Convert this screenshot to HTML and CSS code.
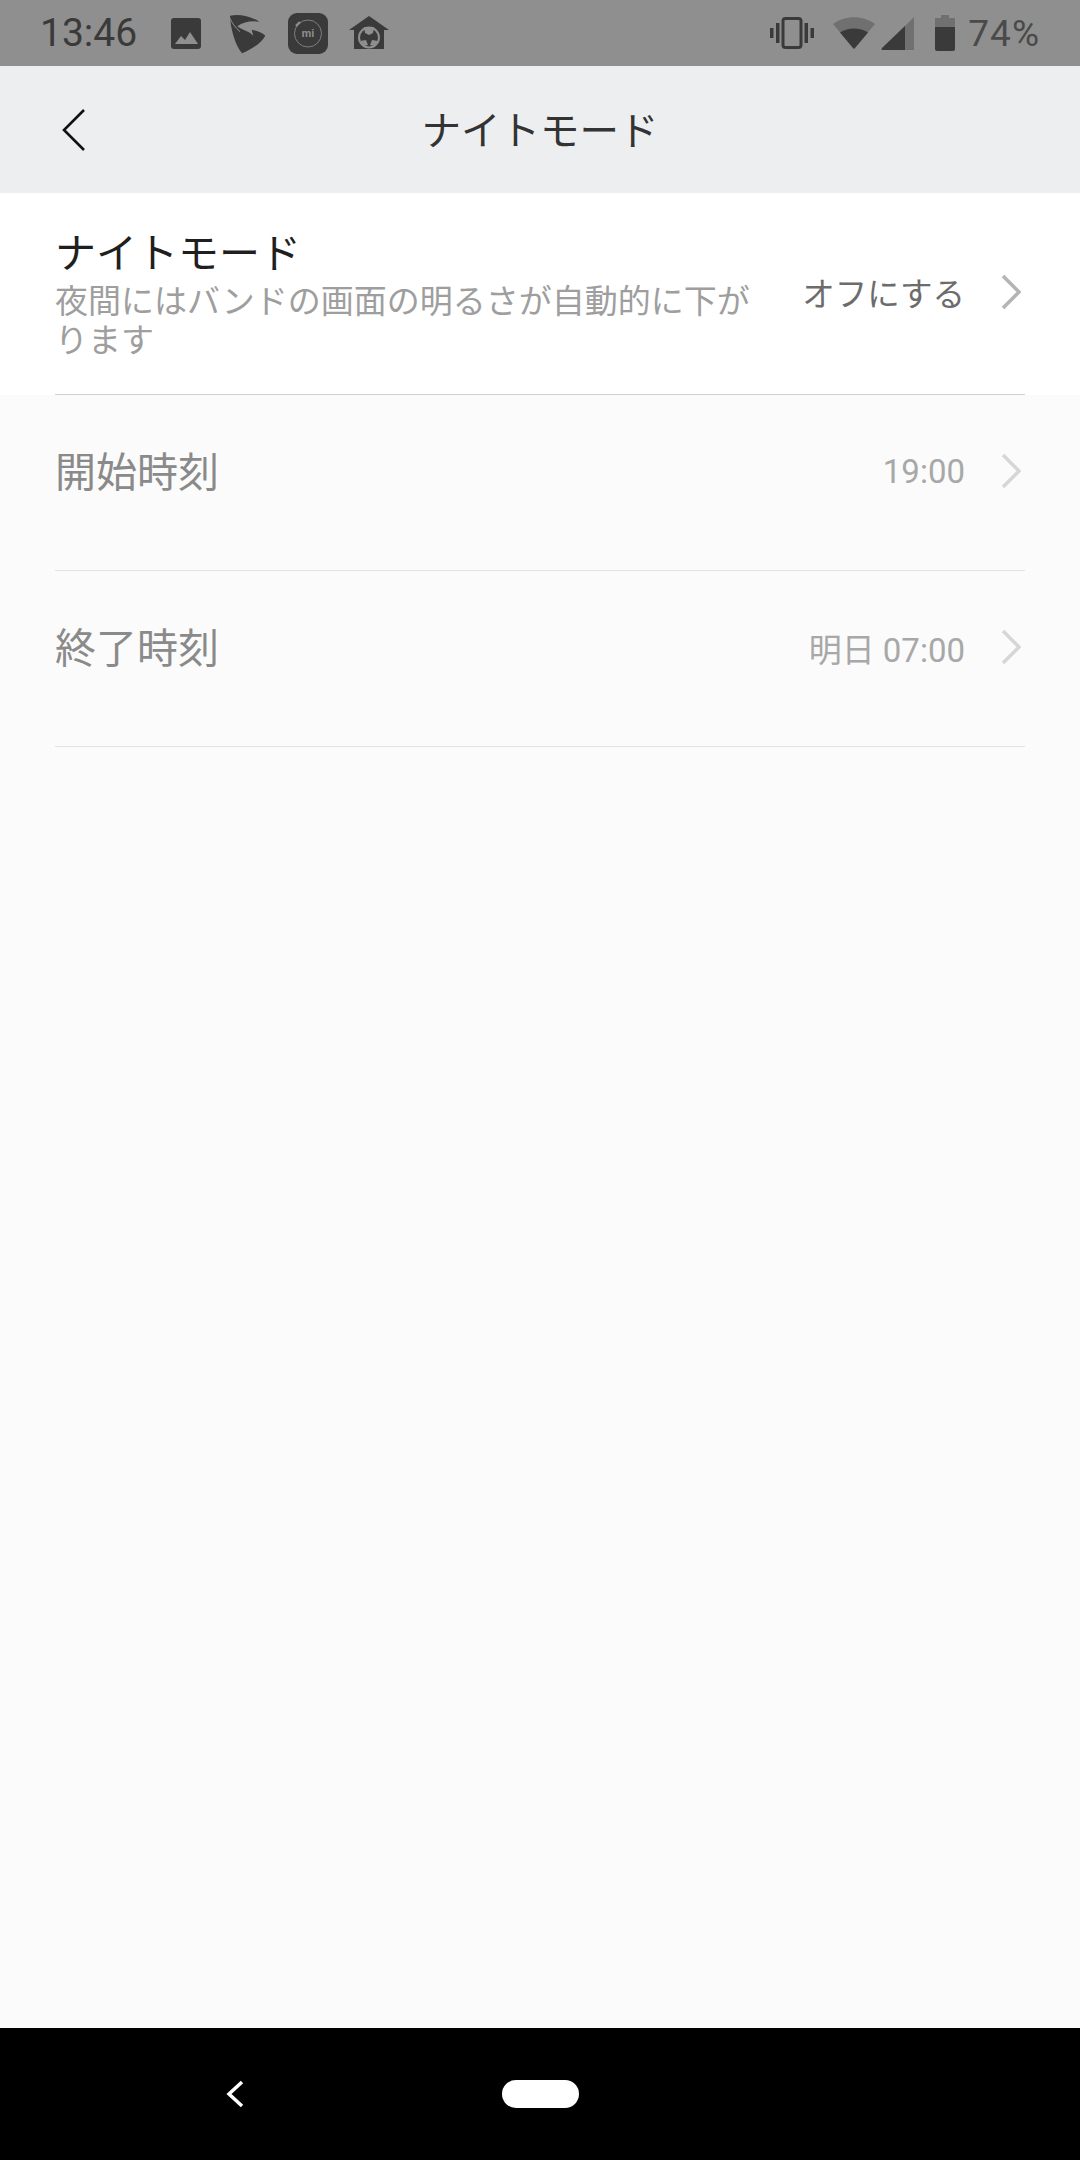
FILE: index.html
```html
<!DOCTYPE html>
<html lang="ja">
<head>
    <meta charset="UTF-8">
    <meta name="viewport" content="width=device-width, initial-scale=1.0">
    <title>ナイトモード</title>
    <link rel="stylesheet" href="styles.css">
</head>
<body>
    <div class="status-bar">
        <span class="clock">13:46</span>
        <div class="notif-icons">
            <svg class="ic-image" viewBox="0 0 30 31"><rect width="30" height="31" rx="3" fill="#3a3a3a"/><path d="M4 26 L10 18 L14 22 L19 14 L27 26 Z" fill="#8f8f8f"/></svg>
            <svg class="ic-swoosh" viewBox="0 0 180 135"><path d="M30 14 C55 8 90 14 118 32 C95 28 70 32 52 46 C65 56 85 60 100 74 L95 56 C112 60 128 66 136 74 C125 95 95 115 66 127 C45 100 32 55 30 14 Z" fill="#3a3a3a"/><path d="M30 22 C36 36 46 50 60 62" fill="none" stroke="#8f8f8f" stroke-width="3"/></svg>
            <svg class="ic-mi" viewBox="0 0 40 41"><rect width="40" height="41" rx="9" fill="#3a3a3a"/><circle cx="20" cy="20.5" r="13.500" fill="none" stroke="#8f8f8f" stroke-width="0.8"/><path d="M8 13 L12 9" stroke="#8f8f8f" stroke-width="2.400"/><text x="20" y="24" class="mi-text">mi</text></svg>
            <svg class="ic-house" viewBox="0 0 40 34"><path d="M20 0 L40 14 L35 14 L35 33 L5 33 L5 14 L0 14 Z" fill="#3a3a3a"/><circle cx="20" cy="21.500" r="10" fill="none" stroke="#8f8f8f" stroke-width="2"/><path d="M15 11 L25 11 L24 17 L20 19 L16 17 Z M11 25 L17 24 L19 29 L15 30 Z M29 25 L23 24 L21 29 L25 30 Z" fill="#8f8f8f"/></svg>
        </div>
        <div class="sys-icons">
            <svg class="ic-vibrate" viewBox="0 0 44 32"><rect x="13" y="1.500" width="18" height="29" rx="2.500" fill="none" stroke="#3a3a3a" stroke-width="3"/><path d="M0 11h3.500v10H0z M6 6h3.500v20H6z M34.500 6H38v20h-3.500z M40.500 11H44v10h-3.500z" fill="#3a3a3a"/></svg>
            <svg class="ic-wifi" viewBox="0 0 42 32"><path d="M0 7 C12 -2 30 -2 42 7 L21 32 Z" fill="#707070"/><path d="M7 15.500 C15 10 27 10 35 15.500 L22 31 Q21 32 20 31 Z" fill="#3a3a3a"/></svg>
            <svg class="ic-signal" viewBox="0 0 33 33"><path d="M33 0 V33 H0 Z" fill="#707070"/><path d="M24 9 V33 H1 Q0 33 1 31 Z" fill="#3a3a3a"/></svg>
            <svg class="ic-battery" viewBox="0 0 20 36"><path d="M6 0 H14 V3 H20 V12 H0 V3 H6 Z" fill="#707070"/><path d="M0 12 H20 V34 Q20 36 18 36 H2 Q0 36 0 34 Z" fill="#3a3a3a"/></svg>
            <span class="percent">74%</span>
        </div>
    </div>

    <div class="header">
        <svg class="back" viewBox="0 0 24 44"><path d="M22 2 L2 22 L22 42" fill="none" stroke="#111" stroke-width="2.600"/></svg>
        <span class="header-title">ナイトモード</span>
    </div>

    <div class="row row-main">
        <div class="row-inner">
            <div class="row-text">
                <div class="row-title">ナイトモード</div>
                <div class="row-sub">夜間にはバンドの画面の明るさが自動的に下がります</div>
            </div>
            <span class="row-value">オフにする</span>
            <svg class="chev" viewBox="0 0 20 36"><path d="M2 2 L18 18 L2 34" fill="none" stroke="#b4b4b4" stroke-width="3.500"/></svg>
        </div>
    </div>

    <div class="row row-off">
        <div class="row-inner">
            <div class="row-text"><div class="row-title">開始時刻</div></div>
            <span class="row-value">19:00</span>
            <svg class="chev" viewBox="0 0 20 36"><path d="M2 2 L18 18 L2 34" fill="none" stroke="#d6d6d6" stroke-width="3.500"/></svg>
        </div>
    </div>

    <div class="row row-off">
        <div class="row-inner">
            <div class="row-text"><div class="row-title">終了時刻</div></div>
            <span class="row-value">明日 07:00</span>
            <svg class="chev" viewBox="0 0 20 36"><path d="M2 2 L18 18 L2 34" fill="none" stroke="#d6d6d6" stroke-width="3.500"/></svg>
        </div>
    </div>

    <div class="spacer"></div>

    <div class="nav-bar">
        <svg class="nav-back" viewBox="0 0 18 28"><path d="M16 2 L3 14 L16 26" fill="none" stroke="#fff" stroke-width="3.500"/></svg>
        <div class="nav-home"></div>
    </div>
</body>
</html>
```

FILE: styles.css
```css
* {
    box-sizing: border-box;
}
html, body {
    height: 100%;
}
body {
    margin: 0;
    display: flex;
    flex-direction: column;
    background-color: #fbfbfb;
    font-family: Roboto, "Noto Sans CJK JP", sans-serif;
}
svg {
    display: block;
    flex: none;
}

/* status bar */
.status-bar {
    height: 66px;
    flex: none;
    display: flex;
    align-items: center;
    padding: 0 40px;
    background-color: #8f8f8f;
    color: #3a3a3a;
}
.clock {
    font-size: 39px;
    width: 95px;
    margin-right: 36px;
}
.notif-icons {
    display: flex;
    align-items: center;
}
.ic-image {
    width: 30px;
    height: 31px;
    margin-right: 19px;
}
.ic-swoosh {
    width: 60px;
    height: 45px;
    margin-right: 8px;
}
.ic-mi {
    width: 40px;
    height: 41px;
    margin-right: 21px;
}
.ic-house {
    width: 40px;
    height: 34px;
}
.mi-text {
    font-family: "Liberation Sans", sans-serif;
    font-size: 11px;
    font-weight: bold;
    text-anchor: middle;
    fill: #8f8f8f;
}
.sys-icons {
    display: flex;
    align-items: center;
    margin-left: auto;
}
.ic-vibrate {
    width: 44px;
    height: 32px;
    margin-right: 19px;
}
.ic-wifi {
    width: 42px;
    height: 32px;
    margin-right: 6px;
}
.ic-signal {
    width: 33px;
    height: 33px;
    margin-right: 21px;
}
.ic-battery {
    width: 20px;
    height: 36px;
    margin-right: 13px;
}
.percent {
    font-size: 37px;
    color: #4a4a4a;
    letter-spacing: 1px;
}

/* header */
.header {
    height: 127px;
    flex: none;
    position: relative;
    display: flex;
    align-items: center;
    justify-content: center;
    padding-bottom: 4px;
    background-color: #edeef0;
}
.back {
    position: absolute;
    left: 62px;
    top: 42px;
    width: 24px;
    height: 44px;
}
.header-title {
    font-family: "Noto Sans CJK JP", sans-serif;
    font-size: 39.5px;
    color: #333;
}

/* rows */
.row {
    flex: none;
    padding-left: 55px;
    padding-right: 55px;
}
.row-main {
    background-color: #fff;
    height: 202px;
}
.row-off {
    height: 176px;
}
.row-inner {
    height: 100%;
    display: flex;
    align-items: center;
    padding-bottom: 4px;
    border-bottom: 1px solid #d0d0d0;
}
.row-off .row-inner {
    padding-bottom: 24px;
    border-bottom-color: #e3e3e3;
}
.row-text {
    flex: 1;
    min-width: 0;
}
.row-main .row-text {
    flex: none;
    width: 700px;
    padding-bottom: 1px;
}
.row-off .row-text {
    padding-bottom: 3px;
}
.row-title {
    font-family: "Noto Sans CJK JP", sans-serif;
    font-size: 41px;
    line-height: 50px;
    color: #1f1f1f;
}
.row-main .row-title {
    margin-bottom: 5px;
}
.row-off .row-title {
    color: #8a8a8a;
}
.row-sub {
    font-family: "Noto Sans CJK JP", sans-serif;
    font-size: 33px;
    line-height: 39px;
    color: #9e9e9e;
}
.row-value {
    margin-left: auto;
    font-size: 32.5px;
    color: #6c6c6c;
}
.row-off .row-value {
    margin-top: 2px;
    color: #a8a8a8;
    font-size: 33px;
}
.chev {
    width: 20px;
    height: 36px;
    margin-left: 36px;
    margin-right: 4px;
}

.spacer {
    flex: 1;
}

/* nav bar */
.nav-bar {
    height: 132px;
    flex: none;
    position: relative;
    background-color: #000;
}
.nav-back {
    position: absolute;
    left: 226px;
    top: 52px;
    width: 18px;
    height: 28px;
}
.nav-home {
    position: absolute;
    left: 502px;
    top: 52px;
    width: 77px;
    height: 28px;
    border-radius: 14px;
    background-color: #fff;
}
```
